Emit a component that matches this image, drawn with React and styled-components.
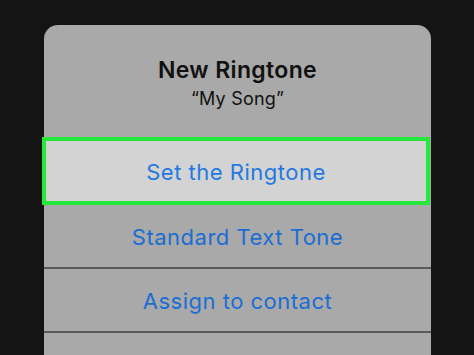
import React from "react";
import styled, { createGlobalStyle } from "styled-components";

const GlobalStyle = createGlobalStyle`
  html, body {
    margin: 0;
    padding: 0;
    background: #141414;
    overflow: hidden;
  }
`;

const Screen = styled.div`
  width: 474px;
  height: 355px;
  background: #141414;
  padding-top: 25px;
  box-sizing: border-box;
  overflow: hidden;
`;

const Sheet = styled.div`
  margin-left: 44px;
  width: 387px;
  height: 340px;
  background: #a9a9a9;
  border-radius: 14px 14px 0 0;
  display: flex;
  flex-direction: column;
  font-family: Inter, "Liberation Sans", sans-serif;
`;

const Header = styled.div`
  flex-shrink: 0;
  height: 112px;
  box-sizing: border-box;
  padding-top: 32px;
  display: flex;
  flex-direction: column;
  align-items: center;
  color: #111;
`;

const Title = styled.div`
  font-size: 23px;
  line-height: 26px;
  font-weight: 600;
  letter-spacing: 0.35px;
`;

const Subtitle = styled.div`
  margin-top: 5px;
  font-size: 18px;
  line-height: 22px;
  letter-spacing: 0.2px;
`;

const Action = styled.div`
  flex-shrink: 0;
  height: ${(p) => (p.$selected ? "68px" : "64px")};
  box-sizing: border-box;
  display: flex;
  align-items: center;
  justify-content: center;
  padding-top: 2px;
  font-size: 22px;
  letter-spacing: 0.5px;
  color: ${(p) => (p.$selected ? "#2479e0" : "#1b6dd4")};
  background: ${(p) => (p.$selected ? "#d3d3d3" : "transparent")};
  border: ${(p) => (p.$selected ? "4px solid #25e83b" : "none")};
  border-bottom: ${(p) =>
    p.$selected ? "4px solid #25e83b" : p.$divider ? "2px solid #5a5a5a" : "none"};
  margin-left: ${(p) => (p.$selected ? "-2px" : "0")};
  width: ${(p) => (p.$selected ? "388px" : "auto")};
`;

export default function App() {
  return (
    <>
      <GlobalStyle />
      <Screen>
        <Sheet>
          <Header>
            <Title>New Ringtone</Title>
            <Subtitle>“My Song”</Subtitle>
          </Header>
          <Action $selected>Set the Ringtone</Action>
          <Action $divider>Standard Text Tone</Action>
          <Action $divider>Assign to contact</Action>
          <Action />
        </Sheet>
      </Screen>
    </>
  );
}
